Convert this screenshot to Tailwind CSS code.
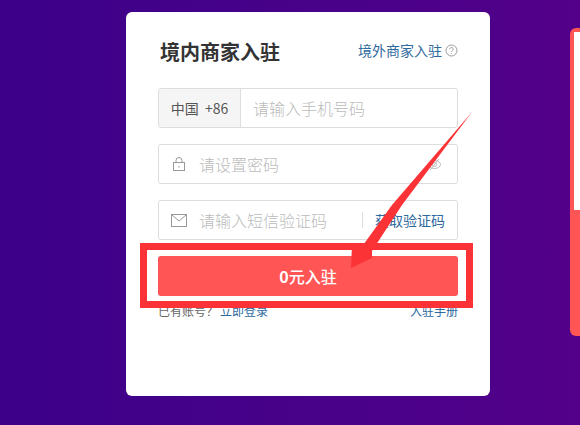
<!DOCTYPE html>
<html>
<head>
    <title>境内商家入驻</title>
    <meta charset="UTF-8">
    <script src="https://cdn.jsdelivr.net/npm/@tailwindcss/browser@4"></script>
</head>
<body class="w-[580px] h-[425px] overflow-hidden relative bg-gradient-to-r from-[#3c0089] to-[#53008a] font-['Noto_Sans_CJK_SC','Noto_Sans',sans-serif]">
    <div class="flex items-start pt-3 pl-[126px]">
        <!-- card -->
        <div class="w-[364px] h-[384px] shrink-0 bg-white rounded-md px-8 pt-7">
            <div class="flex items-center justify-between h-6">
                <h1 class="text-[20px] font-bold text-[#333] ml-0.5">境内商家入驻</h1>
                <a href="#" class="flex items-center gap-[3px] text-sm text-[#2f6a9e] -mt-1">
                    境外商家入驻
                    <svg width="13" height="13" viewBox="0 0 13 13" fill="none" stroke="#999" stroke-width="1">
                        <circle cx="6.5" cy="6.5" r="5.5"/>
                        <path d="M4.8 5.2a1.7 1.7 0 1 1 2.6 1.4c-.6.4-.9.7-.9 1.3M6.5 9.2v.8"/>
                    </svg>
                </a>
            </div>

            <div class="flex flex-col gap-4 mt-6">
                <div class="flex h-10 border border-[#ddd] rounded-[3px]">
                    <div class="w-[82px] bg-[#f5f5f5] border-r border-[#ddd] text-[#555] flex items-center justify-center rounded-l-[3px] text-sm">中国&nbsp;&nbsp;+86</div>
                    <div class="pl-3 flex items-center text-[#bbb] text-[16px] font-light">请输入手机号码</div>
                </div>

                <div class="flex items-center h-10 border border-[#ddd] rounded-[3px] text-[#bbb]">
                    <svg class="ml-3.5" width="12" height="14" viewBox="0 0 12 14" fill="none" stroke="#999" stroke-width="1">
                        <rect x="0.5" y="5.5" width="11" height="8"/>
                        <path d="M3 5.5V3.5a3 3 0 0 1 6 0v2"/>
                        <path d="M6 9v1.5"/>
                    </svg>
                    <span class="ml-[14px] text-[16px] font-light">请设置密码</span>
                    <svg class="ml-auto mr-4" width="13" height="13" viewBox="0 0 13 13" fill="none" stroke="#bbb" stroke-width="1">
                        <ellipse cx="6.5" cy="6.5" rx="6" ry="4"/>
                        <circle cx="6.5" cy="6.5" r="2"/>
                        <path d="M2 12 11 1"/>
                    </svg>
                </div>

                <div class="flex items-center h-10 border border-[#ddd] rounded-[3px] text-[#bbb]">
                    <svg class="ml-3" width="16" height="13" viewBox="0 0 16 13" fill="none" stroke="#999" stroke-width="1">
                        <rect x="0.5" y="0.5" width="15" height="12"/>
                        <path d="M1 1l7 6 7-6"/>
                    </svg>
                    <span class="ml-3 text-[16px] font-light">请输入短信验证码</span>
                    <div class="ml-auto w-px h-4 bg-[#ddd]"></div>
                    <a href="#" class="text-[#2f6a9e] text-sm ml-3 mr-3">获取验证码</a>
                </div>
            </div>

            <button class="w-full h-10 mt-4 bg-[#ff5555] rounded-[3px] text-white text-[16px] font-bold">0<span class="font-medium">元入驻</span></button>

            <div class="flex justify-between text-xs mt-[7px] text-[#666]">
                <div>已有账号？<a href="#" class="text-[#2f6a9e] ml-0.5">立即登录</a></div>
                <a href="#" class="text-[#2f6a9e]">入驻手册</a>
            </div>
        </div>

        <!-- next panel, cut off by the window -->
        <div class="ml-20 mt-4 w-2.5 h-[308px] rounded-l-md bg-[#ff5555] pl-1 pt-1 shrink-0">
            <div class="h-[178px] bg-white"></div>
        </div>
    </div>

    <!-- annotation drawn over the screenshot -->
    <div class="absolute left-[140px] top-[243px] w-[333px] h-[65px] border-[7px] border-[#fb3337]"></div>
    <svg class="absolute left-0 top-0" width="580" height="425" viewBox="0 0 580 425">
        <polygon fill="#fb3337" points="472,112 402,205 372,251 372,258 351,268 352,245 361,248 392,205"/>
    </svg>
</body>
</html>
